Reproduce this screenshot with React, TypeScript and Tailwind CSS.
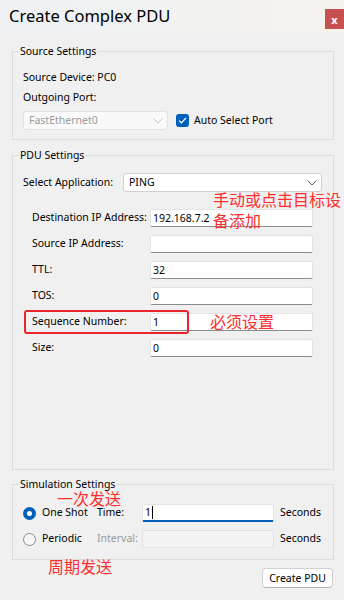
import React from 'react';

// Windows-style "Create Complex PDU" dialog with red annotations
const Chevron = ({ color = '#606060' }: { color?: string }) => (
  <svg width="10" height="6" viewBox="0 0 10 6" fill="none">
    <path d="M0.5 0.5 L5 5 L9.5 0.5" stroke={color} strokeWidth="1" />
  </svg>
);

const TextBox = ({ value }: { value?: string }) => (
  <div className="w-[163px] shrink-0 h-[18px] bg-white border border-[#e3e3e3] border-b-[#8c8c8c] rounded-[2px] flex items-center pl-[2px] text-[10.5px] leading-none">
    {value}
  </div>
);

const FieldRow = ({ label, value }: { label: string; value?: string }) => (
  <div className="flex items-center h-[18px]">
    <div className="w-[127px] shrink-0 pl-[9px] text-[10.5px] whitespace-nowrap">{label}</div>
    <TextBox value={value} />
  </div>
);

const Group = ({ title, className, children }: { title: string; className?: string; children: React.ReactNode }) => (
  <fieldset className={`ml-[12px] w-[322px] border border-[#dcdcdc] pl-[6px] pr-[10px] ${className ?? ''}`}>
    <legend className="px-[1px] text-[10.5px] leading-[14px]">{title}</legend>
    <div className="pl-[4px]">{children}</div>
  </fieldset>
);

const App = () => {
  return (
    <div className="relative w-[344px] h-[600px] overflow-hidden bg-[#f0f0f0] text-black font-['Noto_Sans',sans-serif]">
      {/* Title bar */}
      <div className="h-[33px] flex items-start bg-gradient-to-r from-[#edf1f4] to-[#f6f3ee]">
        <div className="pl-[9px] pt-[5px] text-[16.5px] leading-[22px]">Create Complex PDU</div>
        <div className="ml-auto mt-[9px] w-[19px] h-[20px] bg-[#c75050] flex items-center justify-center text-white text-[11px] font-bold leading-none">
          x
        </div>
      </div>

      {/* Source Settings */}
      <Group title="Source Settings" className="mt-[11px] pt-[11px] pb-[9px]">
        <div className="text-[10.5px] leading-[16px]">Source Device: PC0</div>
        <div className="mt-[4px] text-[10.5px] leading-[16px]">Outgoing Port:</div>
        <div className="mt-[6px] flex items-center">
          <div className="w-[145px] shrink-0 h-[19px] bg-[#f9f9f9] border border-[#e2e2e2] rounded-[3px] flex items-center pl-[5px] pr-[4px] text-[10.5px] text-[#9b9b9b]">
            <span className="flex-1">FastEthernet0</span>
            <Chevron color="#c4c4c4" />
          </div>
          <div className="ml-[8px] shrink-0 w-[13px] h-[13px] rounded-[3px] bg-[#005fb8] flex items-center justify-center">
            <svg width="9" height="7" viewBox="0 0 9 7" fill="none">
              <path d="M1 3.6 L3.3 5.8 L8 1" stroke="white" strokeWidth="1.2" />
            </svg>
          </div>
          <span className="ml-[5px] text-[10.5px]">Auto Select Port</span>
        </div>
      </Group>

      {/* PDU Settings */}
      <Group title="PDU Settings" className="mt-[8px] pt-[11px] pb-[112px]">
        <div className="flex items-center h-[19px]">
          <div className="w-[100px] shrink-0 text-[10.5px] whitespace-nowrap">Select Application:</div>
          <div className="w-[199px] shrink-0 h-[19px] bg-white border border-[#d0d0d0] rounded-[3px] flex items-center pl-[5px] pr-[4px] text-[10.5px]">
            <span className="flex-1">PING</span>
            <Chevron />
          </div>
        </div>
        <div className="mt-[17px] flex flex-col gap-[8px]">
          <FieldRow label="Destination IP Address:" value="192.168.7.2" />
          <FieldRow label="Source IP Address:" />
          <FieldRow label="TTL:" value="32" />
          <FieldRow label="TOS:" value="0" />
          <FieldRow label="Sequence Number:" value="1" />
          <FieldRow label="Size:" value="0" />
        </div>
      </Group>

      {/* Simulation Settings */}
      <Group title="Simulation Settings" className="mt-[7px] pt-[13px] pb-[11px]">
        <div className="flex items-center h-[18px] text-[10.5px]">
          <div className="shrink-0 w-[13px] h-[13px] rounded-full bg-[#005fb8] flex items-center justify-center">
            <div className="w-[5px] h-[5px] rounded-full bg-white" />
          </div>
          <span className="ml-[6px] shrink-0 w-[55px]">One Shot</span>
          <span className="shrink-0 w-[45px]">Time:</span>
          <div className="shrink-0 w-[132px] h-[18px] bg-white border border-[#e3e3e3] border-b-2 border-b-[#005fb8] rounded-[2px] flex items-center pl-[2px] leading-none">
            1<span className="ml-[1px] w-[1px] h-[13px] bg-black" />
          </div>
          <span className="ml-[6px] shrink-0">Seconds</span>
        </div>
        <div className="mt-[8px] flex items-center h-[18px] text-[10.5px]">
          <div className="shrink-0 w-[13px] h-[13px] rounded-full border border-[#8a8a8a] bg-[#f7f7f7]" />
          <span className="ml-[6px] shrink-0 w-[55px]">Periodic</span>
          <span className="shrink-0 w-[45px] text-[#9b9b9b]">Interval:</span>
          <div className="shrink-0 w-[132px] h-[18px] bg-[#f4f4f4] border border-[#e0e0e0] rounded-[2px]" />
          <span className="ml-[6px] shrink-0">Seconds</span>
        </div>
      </Group>

      <div className="mt-[8px] flex justify-end pr-[11px]">
        <button className="w-[71px] h-[20px] bg-white border border-[#d0d0d0] border-b-[#b5b5b5] rounded-[4px] text-[10.5px] leading-none">
          Create PDU
        </button>
      </div>

      {/* Annotations */}
      <div className="absolute left-[24px] top-[310px] w-[165px] h-[24px] border-2 border-[#e8252a] rounded-[3px]" />
      <div className="absolute left-[213px] top-[189px] text-[16px] leading-[21px] text-[#ff2d2d] font-['Noto_Sans_CJK_SC',sans-serif]">
        手动或点击目标设
        <br />
        备添加
      </div>
      <div className="absolute left-[210px] top-[311px] text-[16px] leading-[21px] text-[#ff2d2d] font-['Noto_Sans_CJK_SC',sans-serif]">
        必须设置
      </div>
      <div className="absolute left-[57px] top-[488px] text-[16px] leading-[21px] text-[#ff2d2d] font-['Noto_Sans_CJK_SC',sans-serif]">
        一次发送
      </div>
      <div className="absolute left-[48px] top-[556px] text-[16px] leading-[21px] text-[#ff2d2d] font-['Noto_Sans_CJK_SC',sans-serif]">
        周期发送
      </div>
    </div>
  );
};

export default App;
